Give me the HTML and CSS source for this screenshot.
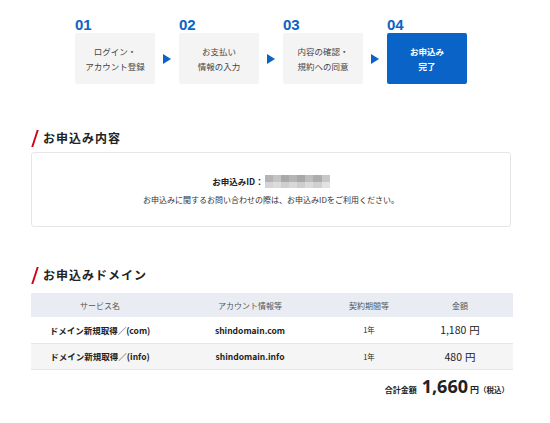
FILE: index.html
```html
<!DOCTYPE html>
<html lang="ja">
<head>
<meta charset="utf-8">
<link rel="stylesheet" href="styles.css">
</head>
<body>
<div class="page">
  <ol class="steps">
    <li class="step">
      <div class="step-num">01</div>
      <div class="step-box">ログイン・<br>アカウント登録</div>
    </li>
    <li class="arrow"></li>
    <li class="step">
      <div class="step-num">02</div>
      <div class="step-box">お支払い<br>情報の入力</div>
    </li>
    <li class="arrow"></li>
    <li class="step">
      <div class="step-num">03</div>
      <div class="step-box">内容の確認・<br>規約への同意</div>
    </li>
    <li class="arrow"></li>
    <li class="step current">
      <div class="step-num">04</div>
      <div class="step-box">お申込み<br>完了</div>
    </li>
  </ol>

  <h2 class="heading heading-first">お申込み内容</h2>
  <div class="info-box">
    <p class="info-id">お申込みID：<span class="blur"><i></i><i></i><i></i><i></i><i></i><i></i><i></i><i></i></span></p>
    <p class="info-note">お申込みに関するお問い合わせの際は、お申込みIDをご利用ください。</p>
  </div>

  <h2 class="heading heading-second">お申込みドメイン</h2>
  <table class="orders">
    <colgroup>
      <col class="c1"><col class="c2"><col class="c3"><col class="c4">
    </colgroup>
    <thead>
      <tr><th>サービス名</th><th>アカウント情報等</th><th>契約期間等</th><th>金額</th></tr>
    </thead>
    <tbody>
      <tr><td class="svc">ドメイン新規取得／(com)</td><td class="acct">shindomain.com</td><td class="term">1年</td><td class="price">1,180<span class="yen">円</span></td></tr>
      <tr class="alt"><td class="svc">ドメイン新規取得／(info)</td><td class="acct">shindomain.info</td><td class="term">1年</td><td class="price">480<span class="yen">円</span></td></tr>
    </tbody>
  </table>
  <div class="total">
    <span class="total-label">合計金額</span>
    <span class="total-num">1,660</span>
    <span class="total-yen">円</span>
    <span class="total-tax">（税込）</span>
  </div>
</div>
</body>
</html>
```

FILE: styles.css
```css
* { box-sizing: border-box; }
html, body { margin: 0; padding: 0; background: #fff; }
body {
  font-family: "Noto Sans CJK JP", "Noto Sans", sans-serif;
  color: #333;
}
.page {
  width: 482px;
  margin-left: 31px;
  padding-top: 17px;
}
.steps {
  list-style: none;
  margin: 0;
  padding: 0;
  display: flex;
  justify-content: center;
  align-items: flex-end;
  margin-left: -2px;
}
.step { width: 80px; }
.step-num {
  font-family: "Liberation Sans", Arial, sans-serif;
  font-weight: bold;
  font-size: 15px;
  line-height: 16px;
  color: #0a64c8;
}
.step-box {
  height: 51px;
  background: #f4f4f4;
  border-radius: 2px;
  display: flex;
  align-items: center;
  justify-content: center;
  text-align: center;
  font-size: 8.5px;
  line-height: 15px;
  color: #444;
}
.step.current .step-box {
  background: #0a64c8;
  color: #fff;
  font-weight: bold;
}
.arrow {
  width: 24px;
  height: 51px;
  display: flex;
  align-items: center;
  justify-content: center;
}
.arrow::before {
  content: "";
  border-left: 8px solid #0a64c8;
  border-top: 5px solid transparent;
  border-bottom: 5px solid transparent;
}
.heading {
  position: relative;
  margin: 0;
  padding-left: 12px;
  font-size: 12px;
  line-height: 18px;
  font-weight: bold;
  letter-spacing: 1px;
  color: #222;
}
.heading::before {
  content: "";
  position: absolute;
  left: 3px;
  top: 1px;
  width: 2px;
  height: 17px;
  background: #d0021b;
  transform: skewX(-18deg);
}
.heading-first { margin-top: 45px; }
.heading-second { margin-top: 39px; }
.info-box {
  margin-top: 5px;
  width: 480px;
  height: 75px;
  border: 1px solid #e6e6e6;
  border-radius: 3px;
  padding-top: 20px;
  text-align: center;
}
.info-box p { margin: 0; }
.info-id {
  font-size: 8.5px;
  font-weight: bold;
  line-height: 16px;
  color: #222;
  display: flex;
  justify-content: center;
  align-items: center;
}
.blur {
  display: inline-flex;
  width: 65px;
  height: 13px;
  margin-left: 1px;
}
.blur i {
  flex: 1;
  background: linear-gradient(#b4b4b4 0 55%, #d4d4d4 55% 100%);
}
.blur i:nth-child(2) { background: linear-gradient(#c4c4c4 0 55%, #dcdcdc 55% 100%); }
.blur i:nth-child(3) { background: linear-gradient(#a9a9a9 0 55%, #cfcfcf 55% 100%); }
.blur i:nth-child(4) { background: linear-gradient(#b9b4b4 0 55%, #d8d8d8 55% 100%); }
.blur i:nth-child(5) { background: linear-gradient(#a8a8a8 0 55%, #cdcdcd 55% 100%); }
.blur i:nth-child(6) { background: linear-gradient(#bdbdbd 0 55%, #dadada 55% 100%); }
.blur i:nth-child(7) { background: linear-gradient(#adadad 0 55%, #d0d0d0 55% 100%); }
.blur i:nth-child(8) { background: linear-gradient(#c8c8c8 0 55%, #e2e2e2 55% 100%); }
.info-note {
  margin-top: 3px !important;
  font-size: 8px;
  line-height: 16px;
  color: #333;
}
.orders {
  margin-top: 9px;
  width: 482px;
  border-collapse: collapse;
  table-layout: fixed;
}
.c1 { width: 138px; }
.c2 { width: 162px; }
.c3 { width: 76px; }
.c4 { width: 106px; }
.orders th {
  height: 24px;
  padding: 0;
  background: #e9edf3;
  font-size: 8px;
  font-weight: normal;
  color: #555;
  text-align: center;
}
.orders td {
  height: 26px;
  padding: 0;
  text-align: center;
  border-bottom: 1px solid #e6e6e6;
  color: #222;
}
.orders tr.alt td { background: #f5f5f5; }
.svc { font-size: 8.5px; font-weight: bold; }
.acct { font-size: 8.5px; font-weight: bold; }
.term { font-size: 7.5px; }
.price { font-size: 10.5px; color: #333; }
.yen { font-size: 10.5px; margin-left: 3px; }
.total {
  margin-top: 5px;
  display: flex;
  justify-content: flex-end;
  align-items: baseline;
  padding-right: 4px;
  color: #222;
  font-weight: bold;
}
.total-label { font-size: 8px; }
.total-num {
  font-family: "Noto Sans", sans-serif;
  font-size: 18px;
  line-height: 22px;
  margin-left: 5px;
}
.total-yen { font-size: 9px; margin-left: 2px; }
.total-tax { font-size: 7.5px; }
```
